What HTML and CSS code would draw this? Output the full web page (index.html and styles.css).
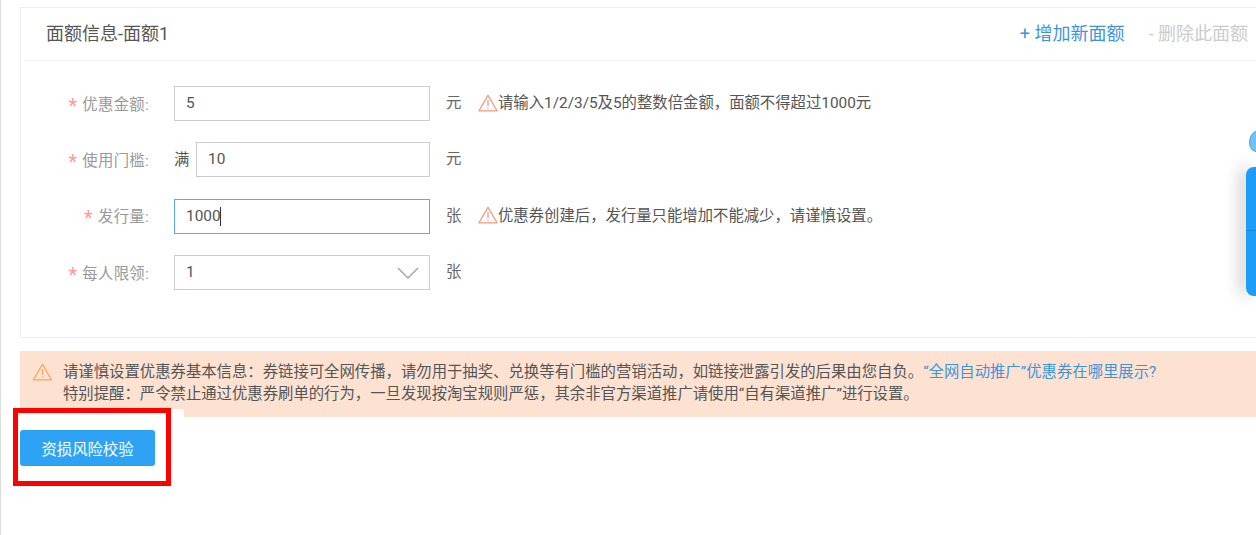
FILE: index.html
```html
<!DOCTYPE html>
<html lang="zh-CN">
<head>
<meta charset="utf-8">
<title>面额信息</title>
<link rel="stylesheet" href="styles.css">
</head>
<body>
<main class="page">
  <section class="card">
    <header class="card-head">
      <h2 class="card-title">面额信息-面额1</h2>
      <div class="card-actions">
        <a class="act act-add">+ 增加新面额</a>
        <a class="act act-del">- 删除此面额</a>
      </div>
    </header>
    <div class="form">
      <div class="row">
        <label class="label"><span class="star">*</span>优惠金额:</label>
        <div class="field"><div class="input">5</div></div>
        <span class="unit">元</span>
        <span class="hint">
          <svg class="warn" viewBox="0 0 20 18"><path d="M10 1.2 19 16.8H1Z" fill="none" stroke="#f0997c" stroke-width="1.3" stroke-linejoin="round"/><path d="M10 6v6M10 13.4v1.4" stroke="#f0997c" stroke-width="1.3" fill="none"/></svg>请输入1/2/3/5及5的整数倍金额，面额不得超过1000元
        </span>
      </div>
      <div class="row">
        <label class="label"><span class="star">*</span>使用门槛:</label>
        <div class="field"><span class="prefix">满</span><div class="input">10</div></div>
        <span class="unit">元</span>
      </div>
      <div class="row">
        <label class="label"><span class="star">*</span>发行量:</label>
        <div class="field"><div class="input input-focus">1000<i class="caret"></i></div></div>
        <span class="unit">张</span>
        <span class="hint">
          <svg class="warn" viewBox="0 0 20 18"><path d="M10 1.2 19 16.8H1Z" fill="none" stroke="#f0997c" stroke-width="1.3" stroke-linejoin="round"/><path d="M10 6v6M10 13.4v1.4" stroke="#f0997c" stroke-width="1.3" fill="none"/></svg>优惠券创建后，发行量只能增加不能减少，请谨慎设置。
        </span>
      </div>
      <div class="row">
        <label class="label"><span class="star">*</span>每人限领:</label>
        <div class="field"><div class="input input-select">1
          <svg class="chev" viewBox="0 0 22 12"><path d="M1 1 11 11 21 1" fill="none" stroke="#aaa" stroke-width="1.6"/></svg>
        </div></div>
        <span class="unit">张</span>
      </div>
    </div>
  </section>

  <section class="alert">
    <svg class="alert-icon" viewBox="0 0 20 18"><path d="M10 1.2 19 16.8H1Z" fill="none" stroke="#f5a55f" stroke-width="1.3" stroke-linejoin="round"/><path d="M10 6v6M10 13.4v1.4" stroke="#f5a55f" stroke-width="1.3" fill="none"/></svg>
    <p class="alert-text">请谨慎设置优惠券基本信息：券链接可全网传播，请勿用于抽奖、兑换等有门槛的营销活动，如链接泄露引发的后果由您自负。<a class="alert-link">“全网自动推广”优惠券在哪里展示?</a><br>特别提醒：严令禁止通过优惠券刷单的行为，一旦发现按淘宝规则严惩，其余非官方渠道推广请使用“自有渠道推广”进行设置。</p>
  </section>

  <div class="actions">
    <button class="btn" type="button">资损风险校验</button>
    <div class="mark-strip"></div>
    <div class="mark"></div>
  </div>
</main>
<div class="float-bubble"></div>
<div class="float-panel"><div class="float-top"></div><div class="float-bottom"></div></div>
</body>
</html>
```
FILE: styles.css
```css
* { box-sizing: border-box; }
html, body { margin: 0; height: 535px; overflow: hidden; background: #fff; }
body {
  font-family: Roboto, "Noto Sans CJK SC", sans-serif;
  font-size: 15.36px;
  color: #555;
  position: relative;
}
.page {
  height: 535px;
  padding: 7px 0 0 20px;
  border-left: 1px solid #ddd;
}
.page > * { margin-left: -1px; }

.card {
  height: 331px;
  border: 1px solid #eee;
  border-right: 0;
}
.card-head {
  height: 53px;
  margin-left: 4px;
  padding: 0 8px 0 21px;
  border-bottom: 1px solid #f2f2f2;
  display: flex;
  align-items: center;
  justify-content: space-between;
}
.card-title { margin: 0; font-size: 18px; font-weight: 400; color: #555; line-height: 50px; }
.card-actions { display: flex; gap: 24px; font-size: 18px; }
.act { line-height: 50px; }
.act-add { color: #3d95d8; }
.act-del { color: #ccc; }

.form { padding-top: 25px; }
.row {
  height: 35px;
  margin-bottom: 21.4px;
  display: flex;
  align-items: center;
}
.label {
  width: 128px;
  padding-top: 3px;
  text-align: right;
  color: #999;
  line-height: 35px;
  letter-spacing: .3px;
  white-space: nowrap;
}
.star {
  color: #f99;
  font-size: 20px;
  line-height: 0;
  margin-right: 5px;
  vertical-align: -3px;
}
.field {
  width: 256px;
  margin-left: 25px;
  display: flex;
  align-items: center;
}
.prefix { width: 22px; flex: none; color: #555; line-height: 37px; height: 35px; }
.input {
  flex: 1;
  height: 35px;
  padding: 0 11px;
  border: 1px solid #ccc;
  line-height: 33px;
  color: #555;
  position: relative;
  display: flex;
  align-items: center;
  background: #fff;
}
.input-focus { border-color: #55aee6; }
.caret { width: 1px; height: 19px; background: #333; margin-left: -1px; }
.input-select { justify-content: space-between; padding-right: 10px; }
.chev { width: 22px; height: 12px; flex: none; }
.unit { margin-left: 16px; width: 16px; color: #666; line-height: 35px; height: 35px; }
.hint { margin-left: 16px; display: flex; align-items: center; color: #555; white-space: nowrap; line-height: 31px; height: 35px; }
.warn { width: 20px; height: 18px; flex: none; margin-top: -2px; }

.alert {
  height: 66px;
  margin-top: 13px;
  padding: 10px 0 0 12px;
  background: #fde2d2;
  display: flex;
  align-items: flex-start;
  white-space: nowrap;
}
.alert-icon { width: 21px; height: 18px; flex: none; margin-top: 2px; }
.alert-text { margin: 0 0 0 10px; line-height: 22px; color: #555; }
.alert-link { color: #3d95d8; }

.actions { position: relative; padding-top: 13px; }
.btn {
  display: block;
  width: 135px;
  height: 36px;
  border: 0;
  border-radius: 3px;
  background: #2ea3f5;
  color: #fff;
  font: inherit;
  padding: 0;
}
.mark {
  position: absolute;
  left: -7px;
  top: -9px;
  width: 158px;
  height: 78px;
  border: 5px solid #f00;
}
.mark-strip {
  position: absolute;
  left: 0;
  top: -8px;
  width: 164px;
  height: 8px;
  background: #fff;
}

.float-bubble {
  position: absolute;
  left: 1249px;
  top: 130px;
  width: 18px;
  height: 22px;
  border-radius: 70% 30% 30% 50%;
  background: #6cc4f7;
  border: 1px solid #59a6d8;
}
.float-panel {
  position: absolute;
  right: 0;
  top: 167px;
  width: 10px;
  height: 129px;
  border-radius: 8px 0 0 8px;
  background: #1c9ef8;
  box-shadow: -6px 0 16px rgba(0, 0, 0, .22);
  overflow: hidden;
}
.float-top { height: 64px; border-bottom: 1px solid #1787d6; }
```
